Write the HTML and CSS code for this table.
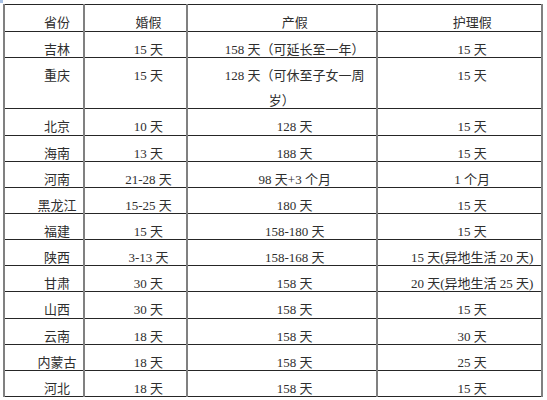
FILE: index.html
```html
<!DOCTYPE html>
<html lang="zh-CN">
<head>
<meta charset="utf-8">
<title>各省婚假产假护理假</title>
<link rel="stylesheet" href="styles.css">
</head>
<body>
<div class="page">
  <div class="handle"></div>
  <table class="leave">
    <colgroup>
      <col class="w1"><col class="w2"><col class="w3"><col class="w4">
    </colgroup>
    <thead>
      <tr class="head"><th><span>省份</span></th><th><span>婚假</span></th><th><span>产假</span></th><th><span>护理假</span></th></tr>
    </thead>
    <tbody>
      <tr><td><span>吉林</span></td><td><span>15 天</span></td><td><span>158 天（可延长至一年）</span></td><td><span>15 天</span></td></tr>
      <tr><td><span>重庆</span></td><td><span>15 天</span></td><td><span>128 天（可休至子女一周岁）</span></td><td><span>15 天</span></td></tr>
      <tr><td><span>北京</span></td><td><span>10 天</span></td><td><span>128 天</span></td><td><span>15 天</span></td></tr>
      <tr><td><span>海南</span></td><td><span>13 天</span></td><td><span>188 天</span></td><td><span>15 天</span></td></tr>
      <tr><td><span>河南</span></td><td><span>21-28 天</span></td><td><span>98 天+3 个月</span></td><td><span>1 个月</span></td></tr>
      <tr><td><span>黑龙江</span></td><td><span>15-25 天</span></td><td><span>180 天</span></td><td><span>15 天</span></td></tr>
      <tr><td><span>福建</span></td><td><span>15 天</span></td><td><span>158-180 天</span></td><td><span>15 天</span></td></tr>
      <tr><td><span>陕西</span></td><td><span>3-13 天</span></td><td><span>158-168 天</span></td><td class="nw"><span>15 天(异地生活 20 天)</span></td></tr>
      <tr><td><span>甘肃</span></td><td><span>30 天</span></td><td><span>158 天</span></td><td class="nw"><span>20 天(异地生活 25 天)</span></td></tr>
      <tr><td><span>山西</span></td><td><span>30 天</span></td><td><span>158 天</span></td><td><span>15 天</span></td></tr>
      <tr><td><span>云南</span></td><td><span>18 天</span></td><td><span>158 天</span></td><td><span>30 天</span></td></tr>
      <tr><td><span>内蒙古</span></td><td><span>18 天</span></td><td><span>158 天</span></td><td><span>25 天</span></td></tr>
      <tr><td><span>河北</span></td><td><span>18 天</span></td><td><span>158 天</span></td><td><span>15 天</span></td></tr>
    </tbody>
  </table>
</div>
</body>
</html>
```

FILE: styles.css
```css
html, body {
  margin: 0;
  padding: 0;
  background: #ffffff;
}

.page {
  padding: 0 0 0 3px;
}

.handle {
  width: 3px;
  height: 3px;
  margin: 0 0 1px -3px;
  background: #a8c2e6;
}

.leave {
  border-collapse: collapse;
  table-layout: fixed;
  width: 538px;
  font-family: "Liberation Serif", "Noto Sans CJK SC", serif;
  font-size: 13px;
  color: #2e2e2e;
}

.w1 { width: 80px; }
.w2 { width: 103px; }
.w3 { width: 189.5px; }
.w4 { width: 165.5px; }

.leave th,
.leave td {
  border-left: 2px solid #808080;
  border-right: 2px solid #808080;
  border-top: 1px solid #262626;
  border-bottom: 1px solid #262626;
  padding: 0 5px;
  text-align: center;
  text-indent: 2em;
  font-weight: normal;
  line-height: 25.14px;
  vertical-align: top;
}

.leave .head th {
  line-height: 26px;
}

.leave span {
  line-height: 13px;
  vertical-align: -5px;
}

.leave td.nw {
  white-space: nowrap;
  padding: 0 1px;
}
```
